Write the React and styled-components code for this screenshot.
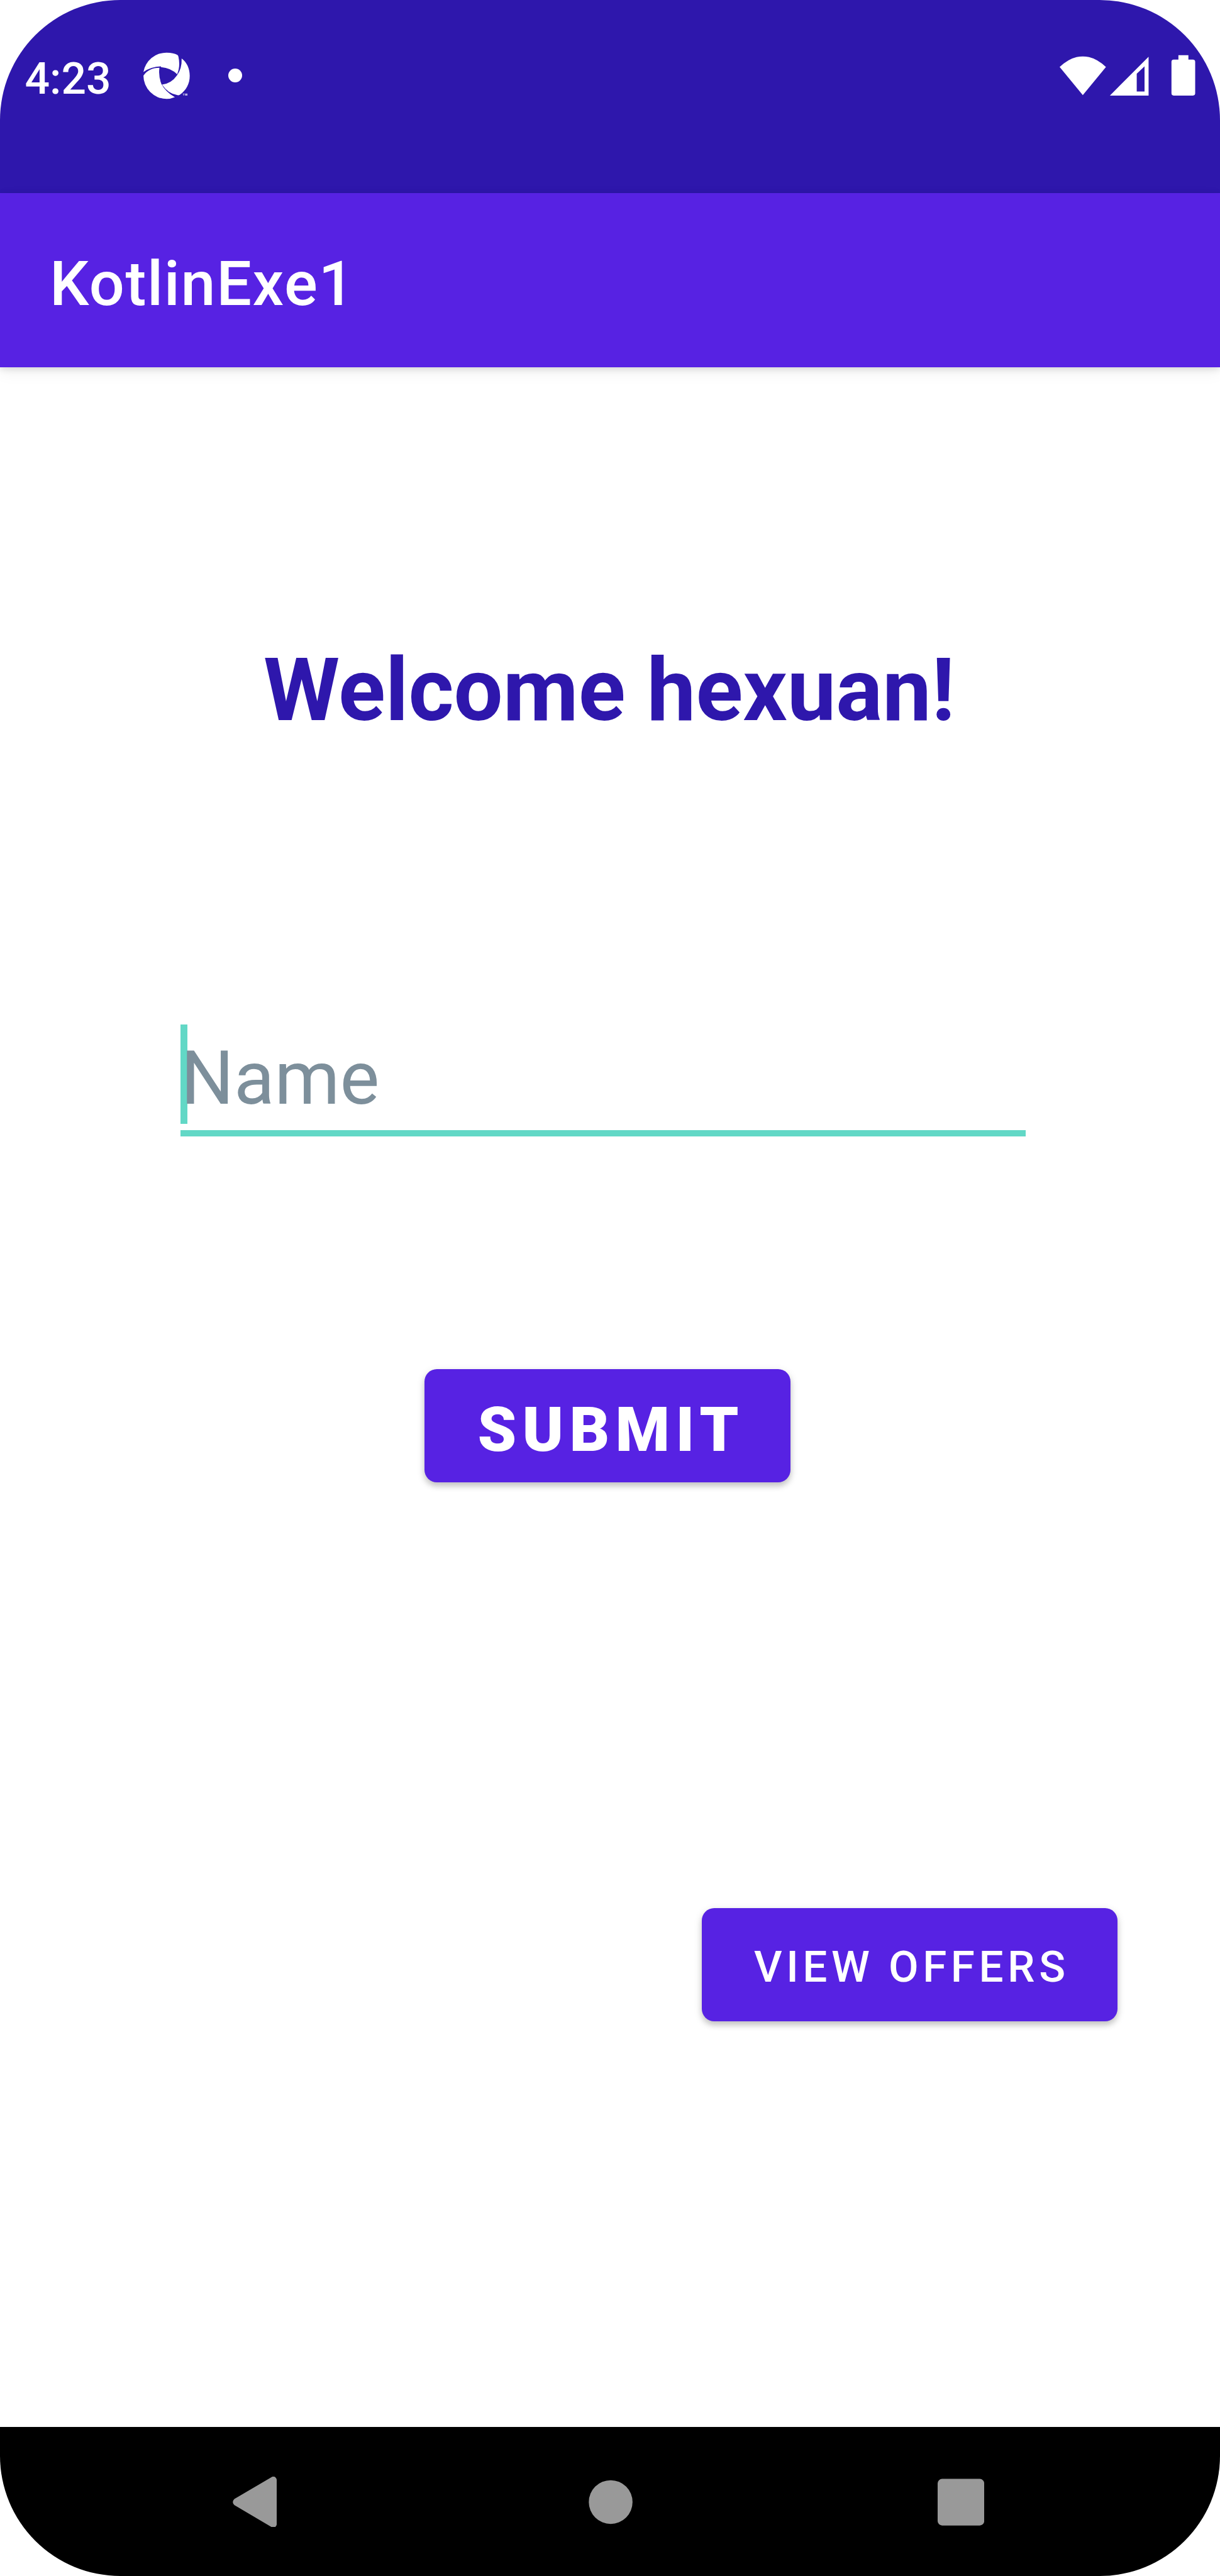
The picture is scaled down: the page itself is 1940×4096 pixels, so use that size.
import React from "react";
import styled, { createGlobalStyle } from "styled-components";

const r = (n) => `${Math.round(n * 0.898148 * 100) / 100}px`;

const Global = createGlobalStyle`
  html, body { margin: 0; padding: 0; background: #ffffff; }
  * { box-sizing: border-box; }
`;

const Phone = styled.div`
  width: 1940px;
  height: 4096px;
  display: flex;
  flex-direction: column;
  overflow: hidden;
  border-radius: ${r(213)};
  background: #ffffff;
  font-family: Roboto, "Liberation Sans", sans-serif;
`;

const StatusBar = styled.header`
  flex: none;
  height: 307px;
  padding: ${r(84)} ${r(32)} 0 ${r(44)};
  display: flex;
  justify-content: space-between;
  align-items: flex-start;
  background: #2e17ac;
  color: #ffffff;
`;

const StatusGroup = styled.div`
  display: flex;
  align-items: center;
  height: ${r(100)};
`;

const Clock = styled.span`
  width: ${r(201)};
  font-size: ${r(77.5)};
  line-height: ${r(100)};
  padding-top: ${r(12)};
  font-weight: 500;
`;

const Drawing = styled.svg`
  display: block;
  flex: none;
  width: ${(p) => r(p.$w)};
  height: ${(p) => r(p.$h)};
  fill: ${(p) => p.$fill || "#ffffff"};
`;

const Dot = styled.i`
  width: ${r(24.5)};
  height: ${r(24.5)};
  margin-left: ${r(59)};
  border-radius: 50%;
  background: #ffffff;
`;

const AppBar = styled.div`
  flex: none;
  height: 277px;
  padding: 0 ${r(88)};
  display: flex;
  align-items: center;
  background: #5722e3;
  box-shadow: 0 3px 10px rgba(0, 0, 0, 0.12), 0 8px 24px rgba(0, 0, 0, 0.06);
`;

const Title = styled.h1`
  margin: 0;
  padding-top: ${r(13)};
  font-size: ${r(110)};
  line-height: 1.17;
  font-weight: 500;
  letter-spacing: ${r(1.8)};
  color: #ffffff;
`;

const Content = styled.main`
  flex: 1;
  display: flex;
  flex-direction: column;
`;

const Welcome = styled.h2`
  margin: ${r(482)} ${r(3)} 0 0;
  height: ${r(182)};
  line-height: ${r(182)};
  text-align: center;
  font-size: ${r(154.2)};
  font-weight: 700;
  white-space: nowrap;
  color: #2e17ac;
`;

const Field = styled.label`
  display: flex;
  align-items: flex-start;
  width: ${r(1496)};
  height: ${r(198)};
  margin: ${r(500)} 0 0 ${r(320)};
  border-bottom: ${r(11.5)} solid #62d8c6;
`;

const Caret = styled.i`
  flex: none;
  width: ${r(12)};
  height: ${r(176)};
  margin-right: ${r(-12)};
  background: #62d8c6;
`;

const Hint = styled.span`
  position: relative;
  font-size: ${r(132)};
  line-height: ${r(192)};
  color: #7d8f9b;
`;

const Button = styled.button`
  flex: none;
  align-self: flex-start;
  width: ${(p) => r(p.$w)};
  height: ${r(200)};
  margin: ${(p) => r(p.$top)} 0 0 ${(p) => r(p.$left)};
  padding: ${(p) => r(p.$drop)} 0 0 ${(p) => r(p.$pad)};
  border: 0;
  border-radius: ${r(22)};
  text-align: left;
  white-space: nowrap;
  font-family: inherit;
  font-size: ${(p) => r(p.$size)};
  font-weight: ${(p) => p.$weight};
  letter-spacing: ${(p) => p.$track}em;
  color: #ffffff;
  background: #5722e3;
  box-shadow: 0 6px 8px rgba(0, 0, 0, 0.14), 0 4px 14px rgba(0, 0, 0, 0.14);
`;

const NavBar = styled.nav`
  flex: none;
  height: 237.5px;
  padding: ${r(88)} ${r(417)} 0 ${r(412)};
  display: flex;
  justify-content: space-between;
  align-items: flex-start;
  background: #000000;
`;

export default function App() {
  return (
    <>
      <Global />
      <Phone>
        <StatusBar>
          <StatusGroup>
            <Clock>4:23</Clock>
            <Drawing $w={100} $h={100} viewBox="0 -3 300 300">
              <path d="M27 129 A124 124 0 0 1 150 26 C175 26 193 30 207 38 Q212 42 213 48 Q224 100 206 141 Q172 107 121 103 L119 99 Q68 100 27 129 Z" />
              <path d="M27 148 Q55 106 112 106 Q106 150 122 192 Q146 237 194 263 Q173 272 150 272 A124 124 0 0 1 27 148 Z" />
              <path d="M230 57 C258 78 273 111 273 149 C273 192 254 226 220 250 Q215 253 208 252 Q158 245 126 196 Q176 189 205 147 Q232 112 230 57 Z" />
              <path opacity="0.65" d="M236 243 H246 V247 H243 V254 H239 V247 H236 Z M248 243 H261 V254 H248 Z" />
            </Drawing>
            <Dot />
          </StatusGroup>
          <StatusGroup>
            <Drawing $w={252} $h={100} viewBox="1876 84 252 100">
              <path d="M1876 119 Q1891 105 1906 101.500 Q1917 99.500 1928 101.500 Q1943 105 1958 119 L1917 169 Z" />
              <path fillRule="evenodd" d="M2033.500 101 V169.700 H1965 Z M2012.500 131 V162.500 H2026.300 V118 Z" />
              <path d="M2086.300 98.300 H2104 V106 H2112 Q2116 106 2116 110 V165.700 Q2116 169.700 2112 169.700 H2078 Q2074 169.700 2074 165.700 V110 Q2074 106 2078 106 H2086.300 Z" />
            </Drawing>
          </StatusGroup>
        </StatusBar>
        <AppBar>
          <Title>KotlinExe1</Title>
        </AppBar>
        <Content>
          <Welcome>Welcome hexuan!</Welcome>
          <Field>
            <Caret />
            <Hint>Name</Hint>
          </Field>
          <Button $w={648} $top={412} $left={752} $pad={93.5} $drop={12.8} $size={110} $weight={900} $track={0.094}>
            SUBMIT
          </Button>
          <Button $w={736} $top={754} $left={1242} $pad={93} $drop={7.5} $size={77} $weight={500} $track={0.0945}>
            VIEW OFFERS
          </Button>
        </Content>
        <NavBar>
          <Drawing $w={78} $h={90} $fill="#999999" viewBox="412 4384 78 90">
            <path d="M480 4385.300 Q484 4382.500 487.500 4385 Q490 4387 490 4390 V4468 Q490 4471 487.500 4473 Q484 4475.500 480 4472.700 L415 4434.500 Q409.500 4429 415 4423.500 Z" />
          </Drawing>
          <Drawing $w={90} $h={90} $fill="#999999" viewBox="0 0 90 90">
            <circle cx="51.300" cy="45" r="38.700" />
          </Drawing>
          <Drawing $w={83} $h={90} $fill="#999999" viewBox="0 0 83 90">
            <rect x="0" y="4" width="82.500" height="82.500" rx="8" />
          </Drawing>
        </NavBar>
      </Phone>
    </>
  );
}
